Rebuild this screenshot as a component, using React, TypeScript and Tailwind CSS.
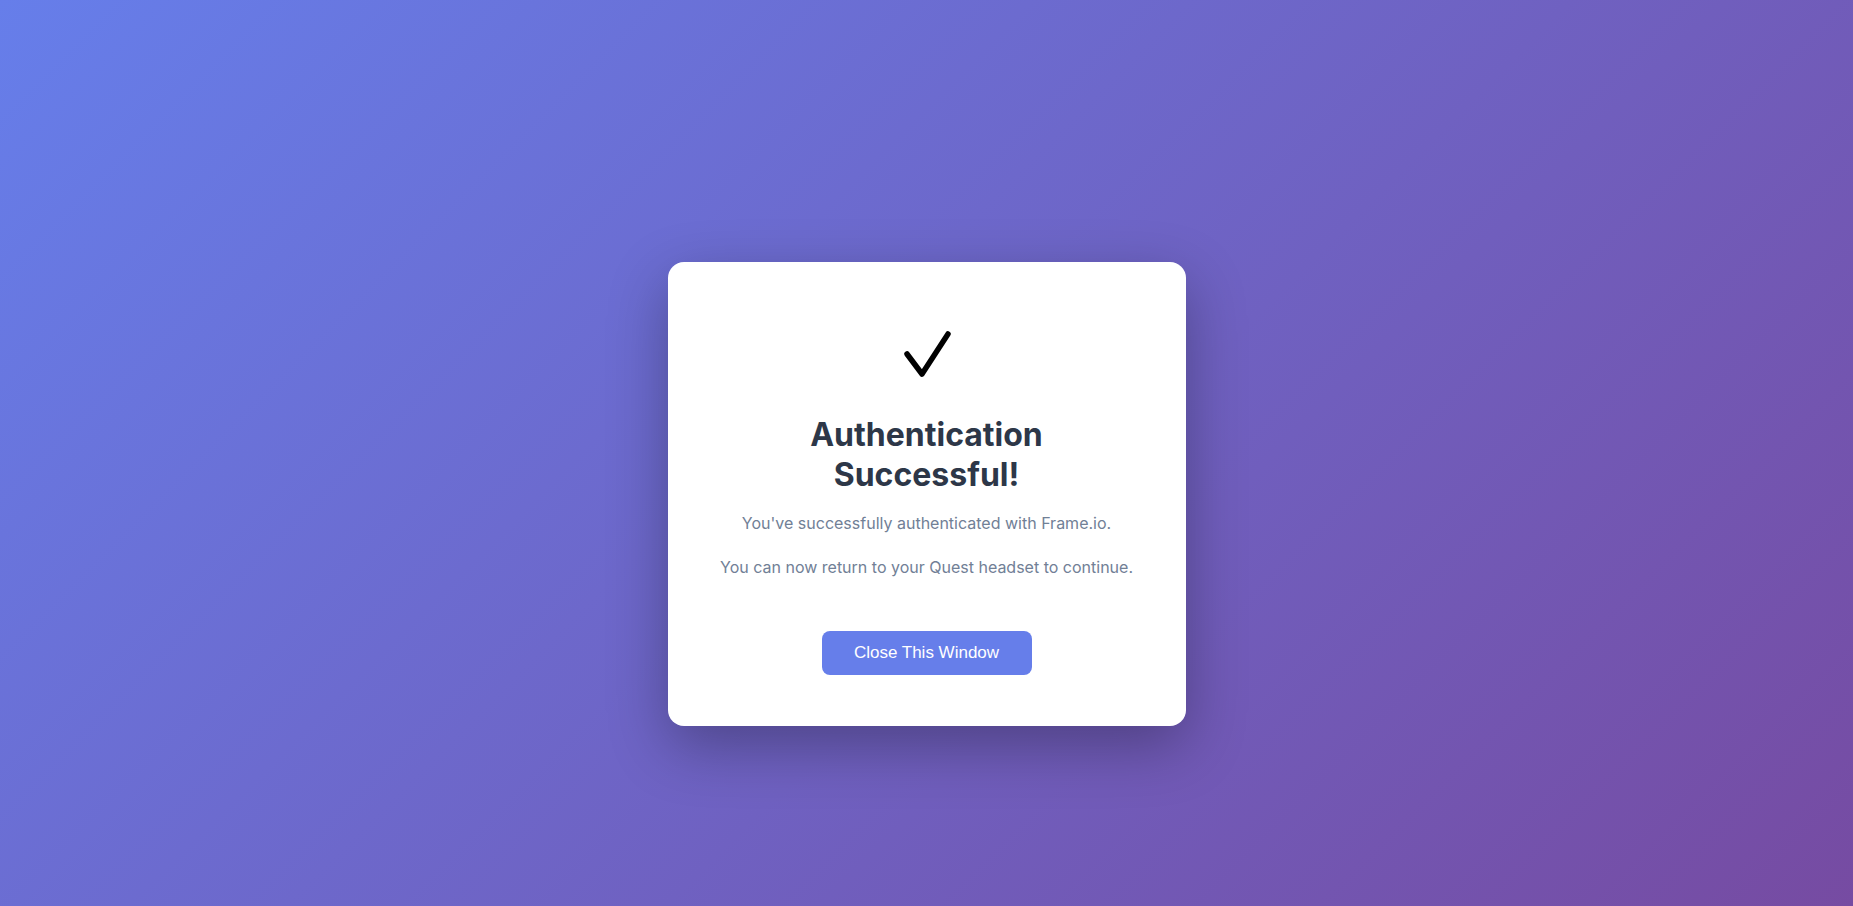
export default function App() {
  return (
    <div
      className="min-h-screen w-full bg-[linear-gradient(135deg,#667eea_0%,#764ba2_100%)] flex justify-center pt-[262px]"
      style={{ fontFamily: 'Inter, "Noto Sans", sans-serif' }}
    >
      <div className="w-[518px] h-[464px] bg-white rounded-[16px] shadow-[0_20px_60px_rgba(0,0,0,0.3)] flex flex-col items-center pt-[68px] text-center">
        <svg width="48" height="48" viewBox="0 0 48 48" fill="none">
          <polyline
            points="4,24 19,44 45,4"
            stroke="#000"
            strokeWidth="5.5"
            strokeLinecap="round"
            strokeLinejoin="round"
          />
        </svg>
        <h1 className="mt-[37px] text-[32px] leading-[40px] font-bold text-[#2d3748]">
          Authentication
          <br />
          Successful!
        </h1>
        <p className="mt-[16px] text-[16px] leading-[24px] text-[#718096]">
          You've successfully authenticated with Frame.io.
        </p>
        <p className="mt-[20px] text-[16px] leading-[24px] text-[#718096]">
          You can now return to your Quest headset to continue.
        </p>
        <button
          className="mt-[52px] h-[44px] w-[210px] rounded-[8px] bg-[#667eea] text-white text-[17px]"
          style={{ fontFamily: '"Liberation Sans", Arial, sans-serif' }}
        >
          Close This Window
        </button>
      </div>
    </div>
  );
}
